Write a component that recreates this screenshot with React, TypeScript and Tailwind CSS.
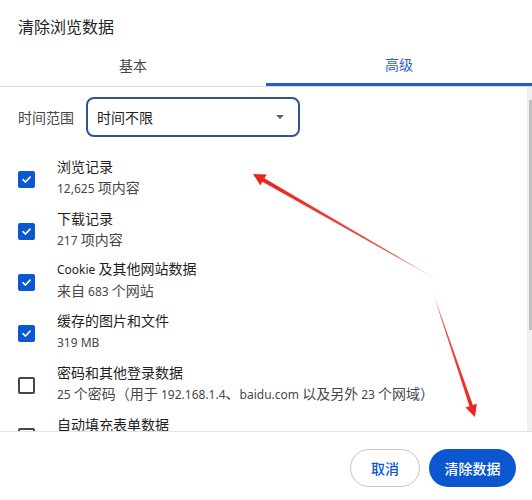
import React from "react";

const FONT = { fontFamily: '"Noto Sans", "Noto Sans CJK SC", sans-serif' };

function Mixed({ text }: { text: string }) {
  const parts = text.split(/([\x00-\x7F]+)/).filter((p) => p.length > 0);
  return (
    <>
      {parts.map((p, i) =>
        /^[\x00-\x7F]+$/.test(p) ? (
          <span key={i} className="text-[12px]">
            {p}
          </span>
        ) : (
          <React.Fragment key={i}>{p}</React.Fragment>
        )
      )}
    </>
  );
}

function Check({ checked }: { checked: boolean }) {
  if (checked) {
    return (
      <div className="w-[17px] h-[17px] rounded-[2px] bg-[#0b57d0] flex items-center justify-center shrink-0">
        <svg width="11" height="11" viewBox="0 0 12 12">
          <path d="M2.2 6.2 L4.9 8.8 L9.9 3.4" fill="none" stroke="white" strokeWidth="1.7" strokeLinecap="round" strokeLinejoin="round" />
        </svg>
      </div>
    );
  }
  return <div className="w-[17px] h-[17px] rounded-[2px] border-2 border-[#444746] shrink-0" />;
}

const items = [
  { label: "浏览记录", sub: "12,625 项内容", checked: true },
  { label: "下载记录", sub: "217 项内容", checked: true },
  { label: "Cookie 及其他网站数据", sub: "来自 683 个网站", checked: true },
  { label: "缓存的图片和文件", sub: "319 MB", checked: true },
  { label: "密码和其他登录数据", sub: "25 个密码（用于 192.168.1.4、baidu.com 以及另外 23 个网域）", checked: false },
  { label: "自动填充表单数据", sub: "", checked: false },
];

export default function App() {
  return (
    <div className="relative w-[532px] h-[500px] bg-white overflow-hidden flex flex-col" style={FONT}>
      <div className="h-[44px] pl-[18px] pt-[16px] text-[16px] leading-[22px] text-[#1f1f1f]">清除浏览数据</div>
      <div className="flex border-b border-[#dadce0]">
        <div className="w-1/2 h-[42px] flex items-center justify-center text-[14px] text-[#444746]">基本</div>
        <div className="w-1/2 h-[42px] flex items-center justify-center text-[14px] text-[#2b63c6] border-b-[3px] border-[#1f5fc8] pt-[1px]">高级</div>
      </div>
      <div className="flex h-[345px] border-b border-[#e3e3e3]">
        <div className="flex-1 overflow-hidden">
          <div className="flex items-center pt-[10px] pl-[18px]">
            <div className="w-[68px] text-[14px] text-[#444746]">时间范围</div>
            <div className="w-[214px] h-[40px] border-2 border-[#2c5591] rounded-[8px] flex items-center pl-[9px] pr-[14px] text-[14px] text-[#1f1f1f]">
              <span className="flex-1">时间不限</span>
              <svg width="8" height="4" viewBox="0 0 8 4">
                <path d="M0 0 L8 0 L4 4 Z" fill="#5f6368" />
              </svg>
            </div>
          </div>
          <div className="pt-[15px]">
            {items.map((it, i) => (
              <div key={i} className="h-[51.4px] flex items-center pl-[18px] gap-[22px]">
                <div className="pt-[4px]">
                  <Check checked={it.checked} />
                </div>
                <div className="flex flex-col">
                  <div className="text-[14px] leading-[21px] text-[#1f1f1f] whitespace-nowrap">
                    <Mixed text={it.label} />
                  </div>
                  <div className="text-[14px] leading-[21px] text-[#474747] whitespace-nowrap">
                    {it.sub ? <Mixed text={it.sub} /> : "\u00a0"}
                  </div>
                </div>
              </div>
            ))}
          </div>
        </div>
        <div className="w-[5px] bg-[#f1f1f1] pt-[13px]">
          <div className="ml-[2px] w-[3px] h-[230px] bg-[#c1c1c1]" />
        </div>
      </div>
      <div className="flex justify-end gap-[9px] pt-[17px] pr-[16px]">
        <button className="w-[70px] h-[38px] rounded-full border border-[#c4c7c5] text-[14px] font-medium text-[#0b57d0] bg-white">取消</button>
        <button className="w-[87px] h-[38px] rounded-full bg-[#0b57d0] text-[14px] font-medium text-white">清除数据</button>
      </div>
      <svg className="absolute inset-0 pointer-events-none" width="532" height="500" viewBox="0 0 532 500">
        <defs>
          <linearGradient id="g1" x1="443" y1="283" x2="253" y2="174" gradientUnits="userSpaceOnUse">
            <stop offset="0" stopColor="#e52b1e" stopOpacity="0" />
            <stop offset="0.25" stopColor="#e52b1e" stopOpacity="0.8" />
            <stop offset="1" stopColor="#e8231a" />
          </linearGradient>
          <linearGradient id="g2" x1="432" y1="290" x2="475" y2="417" gradientUnits="userSpaceOnUse">
            <stop offset="0" stopColor="#e52b1e" stopOpacity="0" />
            <stop offset="0.2" stopColor="#e52b1e" stopOpacity="0.8" />
            <stop offset="1" stopColor="#e8231a" />
          </linearGradient>
        </defs>
        <polygon points="443,283 262.4,181.7 260.4,185.6 253,174 266.8,174.6 264.4,178.3" fill="url(#g1)" />
        <polygon points="432,290 472.85,405 476.8,403.7 475,417 465.5,407.5 469.45,406.2" fill="url(#g2)" />
      </svg>
    </div>
  );
}
